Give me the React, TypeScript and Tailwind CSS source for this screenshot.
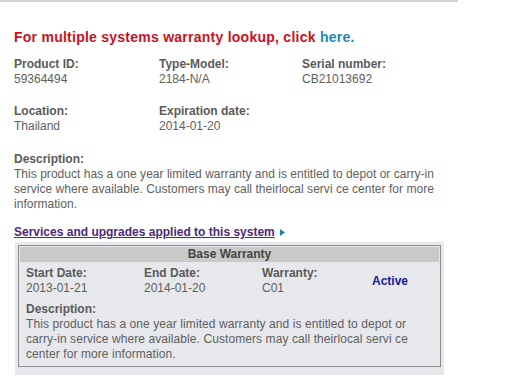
const Field = ({ label, value, className = '' }: { label: string; value: string; className?: string }) => (
  <div className={className}>
    <div className="font-bold text-[#5a5a5a]">{label}</div>
    <div className="text-[#5e5e5e]">{value}</div>
  </div>
)

export default function App() {
  return (
    <div className="w-[512px] h-[384px] overflow-hidden bg-white font-['Liberation_Sans',Arial,sans-serif] text-[12px] leading-[15px] text-[#5e5e5e]">
      <div className="w-[458px] h-[2px] bg-[#d4d4d4]" />

      <div className="pl-[14px]">
        <h2 className="mt-[27px] text-[14px] leading-[16px] font-bold tracking-[0.25px] text-[#cc1020]">
          For multiple systems warranty lookup, click <span className="text-[#2288bb]">here.</span>
        </h2>

        {/* Product info */}
        <div className="mt-[12px] grid grid-cols-[145px_143px_1fr] gap-y-[17px]">
          <Field label="Product ID:" value="59364494" />
          <Field label="Type-Model:" value="2184-N/A" />
          <Field label="Serial number:" value="CB21013692" />
          <Field label="Location:" value="Thailand" />
          <Field label="Expiration date:" value="2014-01-20" />
        </div>

        <div className="mt-[18px]">
          <div className="font-bold text-[#5a5a5a]">Description:</div>
          <div className="whitespace-nowrap tracking-[0.03px]">
            This product has a one year limited warranty and is entitled to depot or carry-in
            <br />
            service where available. Customers may call theirlocal servi ce center for more
            <br />
            information.
          </div>
        </div>

        <div className="mt-[13px] flex items-center gap-[5px]">
          <a className="font-bold text-[#4b2a78] underline">Services and upgrades applied to this system</a>
          <svg width="5" height="7" viewBox="0 0 5 7">
            <path d="M0 0 L5 3.5 L0 7 Z" fill="#1f7fae" />
          </svg>
        </div>
      </div>

      {/* Base warranty box */}
      <div className="ml-[15px] mt-[2px] w-[429px] bg-[#e7e8ec] pt-[3px] pl-[3px] pb-[8px]">
        <div className="w-[423px] border border-[#8c8c8c] p-[1px] pb-[4px]">
          <div className="h-[15px] bg-[#c9c9c9] text-center font-bold leading-[15px] text-[#444]">Base Warranty</div>
          <div className="pl-[6px]">
            <div className="mt-[4px] grid grid-cols-[118px_118px_110px_1fr] items-center">
              <Field label="Start Date:" value="2013-01-21" />
              <Field label="End Date:" value="2014-01-20" />
              <Field label="Warranty:" value="C01" />
              <div className="font-bold text-[#1a1a99]">Active</div>
            </div>
            <div className="mt-[6px]">
              <div className="font-bold text-[#5a5a5a]">Description:</div>
              <div className="whitespace-nowrap tracking-[0.08px]">
                This product has a one year limited warranty and is entitled to depot or
                <br />
                carry-in service where available. Customers may call theirlocal servi ce
                <br />
                center for more information.
              </div>
            </div>
          </div>
        </div>
      </div>
    </div>
  )
}
